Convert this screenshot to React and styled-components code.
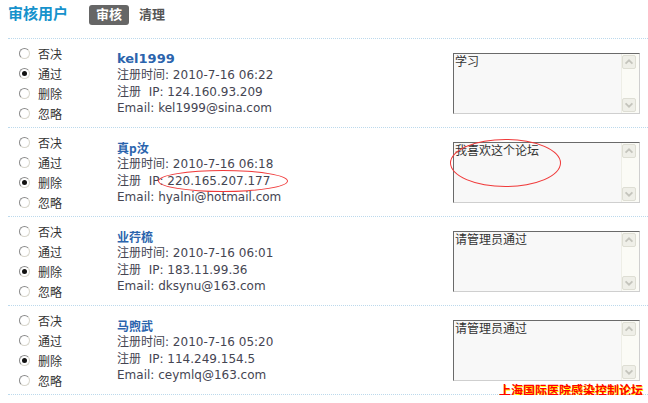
import React from "react";
import styled, { createGlobalStyle } from "styled-components";

const GlobalStyle = createGlobalStyle`
  body {
    margin: 0;
    background: #fff;
    font-family: "DejaVu Sans", "Noto Sans CJK SC", sans-serif;
    font-size: 12px;
    color: #333;
  }
`;

const users = [
  {
    name: "kel1999",
    latin: true,
    time: "2010-7-16 06:22",
    ip: "124.160.93.209",
    email: "kel1999@sina.com",
    note: "学习",
    action: "pass",
  },
  {
    name: "真p汝",
    time: "2010-7-16 06:18",
    ip: "220.165.207.177",
    email: "hyalni@hotmail.com",
    note: "我喜欢这个论坛",
    action: "delete",
    marked: true,
  },
  {
    name: "业荇梳",
    time: "2010-7-16 06:01",
    ip: "183.11.99.36",
    email: "dksynu@163.com",
    note: "请管理员通过",
    action: "delete",
  },
  {
    name: "马煦武",
    time: "2010-7-16 05:20",
    ip: "114.249.154.5",
    email: "ceymlq@163.com",
    note: "请管理员通过",
    action: "delete",
  },
];

const actions = [
  { key: "reject", label: "否决" },
  { key: "pass", label: "通过" },
  { key: "delete", label: "删除" },
  { key: "ignore", label: "忽略" },
];

export default function App() {
  return (
    <Page>
      <GlobalStyle />
      <Header>
        <Title>审核用户</Title>
        <Tab $active>审核</Tab>
        <Tab>清理</Tab>
      </Header>
      <List>
        {users.map((u) => (
          <Row key={u.email}>
            <Radios>
              {actions.map((a) => (
                <RadioItem key={a.key}>
                  <Radio $checked={u.action === a.key} />
                  {a.label}
                </RadioItem>
              ))}
            </Radios>
            <Info>
              <Name $latin={u.latin}>{u.name}</Name>
              <Line>注册时间: {u.time}</Line>
              <Line>
                注册{"\u00a0\u00a0"}IP:{" "}
                <Value>
                  {u.ip}
                  {u.marked && <IpRing />}
                </Value>
              </Line>
              <Line>Email: {u.email}</Line>
            </Info>
            <NoteBox>
              <NoteText>{u.note}</NoteText>
              <ScrollBar>
                <ScrollBtn>
                  <Chevron d="M3 9 L7 5 L11 9" />
                </ScrollBtn>
                <ScrollBtn>
                  <Chevron d="M3 5 L7 9 L11 5" />
                </ScrollBtn>
              </ScrollBar>
              {u.marked && <NoteRing />}
            </NoteBox>
          </Row>
        ))}
        <Watermark>上海国际医院感染控制论坛</Watermark>
      </List>
    </Page>
  );
}

function Chevron({ d }) {
  return (
    <svg width="14" height="14" viewBox="0 0 14 14">
      <path d={d} fill="none" stroke="#c4c4bc" strokeWidth="2" />
    </svg>
  );
}

const Page = styled.div`
  margin-left: 8px;
`;

const Header = styled.div`
  display: flex;
  align-items: flex-start;
  height: 33px;
  padding-top: 5px;
  border-bottom: 1px dotted #bcd9ec;
`;

const Title = styled.h2`
  margin: 0 21px 0 0;
  font-size: 15px;
  line-height: 19px;
  font-weight: bold;
  color: #1692cc;
`;

const Tab = styled.span`
  padding: 0 7px;
  height: 20px;
  line-height: 20px;
  margin-right: 3px;
  border-radius: 3px;
  font-size: 13px;
  font-weight: bold;
  background: ${(p) => (p.$active ? "#666" : "transparent")};
  color: ${(p) => (p.$active ? "#fff" : "#555")};
`;

const List = styled.div`
  position: relative;
`;

const Row = styled.div`
  display: grid;
  grid-template-columns: 109px 1fr 187px;
  height: 88px;
  padding-right: 8px;
  border-bottom: 1px dotted #bcd9ec;
`;

const Radios = styled.div`
  padding: 4px 0 0 11px;
`;

const RadioItem = styled.div`
  display: flex;
  align-items: center;
  gap: 8px;
  height: 20px;
  color: #333;
`;

const Radio = styled.span`
  position: relative;
  width: 9px;
  height: 9px;
  border-radius: 50%;
  border: 1px solid;
  border-color: #8a8a8a #d8d6cc #d8d6cc #8a8a8a;
  background: #fff;
  &::after {
    content: "";
    display: ${(p) => (p.$checked ? "block" : "none")};
    position: absolute;
    left: 2px;
    top: 2px;
    width: 5px;
    height: 5px;
    border-radius: 50%;
    background: #111;
  }
`;

const Info = styled.div`
  padding-top: 13px;
  color: #454552;
`;

const Name = styled.div`
  font-size: ${(p) => (p.$latin ? "13px" : "12px")};
  line-height: 14px;
  margin-bottom: 1px;
  font-weight: bold;
  color: #2b64ad;
  font-family: ${(p) =>
    p.$latin ? `"DejaVu Sans", sans-serif` : `"Noto Sans CJK SC", serif`};
`;

const Line = styled.div`
  line-height: 16.5px;
`;

const Value = styled.span`
  position: relative;
`;

const IpRing = styled.span`
  position: absolute;
  left: -9px;
  top: -4px;
  width: 130px;
  height: 22px;
  border: 1px solid #f03a3a;
  border-radius: 50%;
  box-sizing: border-box;
  pointer-events: none;
`;

const NoteBox = styled.div`
  position: relative;
  display: flex;
  margin-top: 14px;
  height: 61px;
  box-sizing: border-box;
  border: 1px solid;
  border-color: #6a6a6a #cfcfcf #cfcfcf #6a6a6a;
  background: #f8f8f8;
`;

const NoteText = styled.div`
  flex: 1;
  padding: 1px;
  font-size: 12px;
  line-height: 14px;
  color: #333;
`;

const ScrollBar = styled.div`
  width: 16px;
  display: flex;
  flex-direction: column;
  justify-content: space-between;
  padding: 1px 1px 1px 0;
  background: #fbfbf6;
  border-left: 1px solid #eeeee6;
`;

const ScrollBtn = styled.div`
  width: 14px;
  height: 14px;
  box-sizing: border-box;
  display: flex;
  align-items: center;
  justify-content: center;
  border: 1px solid #deded4;
  border-radius: 2px;
  background: #efefe8;
  svg {
    display: block;
  }
`;

const NoteRing = styled.span`
  position: absolute;
  left: -4px;
  top: -4px;
  width: 111px;
  height: 48px;
  border: 1px solid #f03a3a;
  border-radius: 50%;
  box-sizing: border-box;
  pointer-events: none;
`;

const Watermark = styled.div`
  position: absolute;
  right: 5px;
  bottom: -2px;
  font-family: "Noto Sans CJK SC", sans-serif;
  font-size: 12px;
  line-height: 14px;
  font-weight: bold;
  color: #ff0000;
  text-shadow: 1px 1px 0 #ffff00;
`;
